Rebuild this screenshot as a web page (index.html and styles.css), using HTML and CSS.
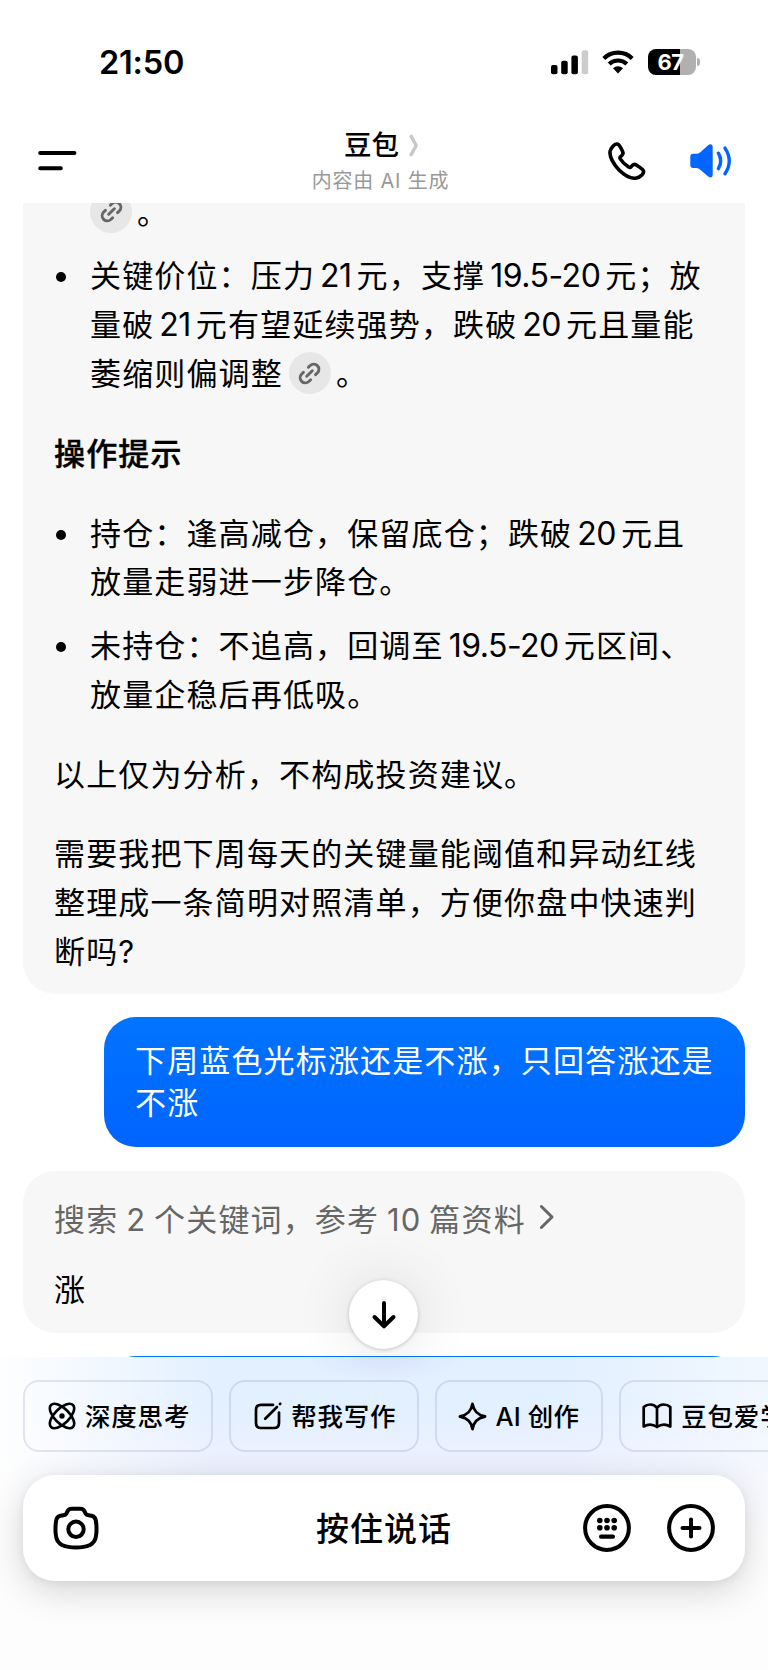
FILE: index.html
```
<!DOCTYPE html>
<html lang="zh-CN">
<head>
  <meta charset="UTF-8">
  <meta name="viewport" content="width=device-width, initial-scale=1.0">
  <title>豆包</title>
  <link rel="stylesheet" href="styles.css">
</head>
<body>
  <div class="status-bar">
    <span class="time">21:50</span>
    <div class="status-icons">
      <svg class="signal" width="38" height="25" viewBox="0 0 38 25">
        <rect x="0" y="15" width="6.5" height="9.2" rx="2"/>
        <rect x="10.2" y="10.7" width="6.5" height="13.5" rx="2"/>
        <rect x="20.4" y="5.5" width="6.5" height="18.7" rx="2"/>
        <rect x="30.7" y="0.3" width="6.5" height="23.9" rx="2" fill="#ccc"/>
      </svg>
      <svg class="wifi" width="32" height="24" viewBox="0 0 32 24">
        <path d="M1.8 8.4a20.5 20.5 0 0 1 28.4 0" fill="none" stroke="#000" stroke-width="4.2"/>
        <path d="M7.2 14a12.7 12.7 0 0 1 17.6 0" fill="none" stroke="#000" stroke-width="4.1"/>
        <path d="M11 18.2a7.4 7.4 0 0 1 10 0l-5 5.2z"/>
      </svg>
      <div class="battery"><span>67</span></div>
    </div>
  </div>

  <header class="nav">
    <svg class="menu" width="40" height="22" viewBox="0 0 40 22" fill="none" stroke="#000" stroke-width="4" stroke-linecap="round">
      <path d="M2.2 3H36.4M2.2 18.2H22.8"/>
    </svg>
    <div class="nav-title">
      <h1><span>豆包</span>
        <svg width="10" height="23" viewBox="0 0 10 23" fill="none" stroke="#c8c8c8" stroke-width="3.6" stroke-linecap="round" stroke-linejoin="round"><path d="M2.2 2.5L7.2 11.5L2.2 20.5"/></svg>
      </h1>
      <p>内容由 AI 生成</p>
    </div>
    <div class="nav-actions">
      <svg width="38" height="38" viewBox="0 0 38 38" fill="none" stroke="#000" stroke-width="3.6" stroke-linejoin="round">
        <path d="M9.8 2.2C7.2 1.3 3 5 2.1 9.2C1.2 14 5.2 22 10.8 27.7C16.5 33.3 23.5 37 28.4 36C32.8 35.1 36.4 31.2 35.4 28.6C34.8 27 30.7 24.6 28.6 23.2C26.4 21.8 24.9 22.5 23.8 24.1C22.7 25.8 21.8 25.8 20.3 24.8C17.5 23 14 19.6 12.3 16.9C11.5 15.5 11.9 14.8 13.3 13.9C15.2 12.6 15.6 11.4 14.5 9.2C13.2 6.6 11.5 2.9 9.8 2.2Z"/>
      </svg>
      <svg width="42" height="34" viewBox="0 0 42 34">
        <path fill="#06f" d="M.3 12.8q0-2.8 2.8-3h3.2q2.2-.1 4-1.6l7.6-6.8C20.3-.7 22.7.2 22.7 3v27.7c0 2.8-2.4 3.7-4.8 1.6l-7.6-6.6q-1.8-1.6-4-1.7H3.1q-2.8-.2-2.8-3z"/>
        <path d="M28.4 9.2q4.6 7.7 0 15.4M35 4.1q8.5 12.9 0 25.6" fill="none" stroke="#06f" stroke-width="3.4" stroke-linecap="round"/>
      </svg>
    </div>
  </header>

  <main class="chat">
    <section class="answer answer-long">
      <ul>
        <li class="cut"><span class="ref first"><svg viewBox="0 0 24 24"><path d="M9.5 14.5l5-5M11 6.5l1.6-1.6a4.6 4.6 0 0 1 6.5 6.5l-1.7 1.6M13 17.5l-1.6 1.6a4.6 4.6 0 0 1-6.5-6.5L6.6 11"/></svg></span>。</li>
        <li>关键价位：压力<span class="num">21</span>元，支撑<span class="num">19.5-20</span>元；放<br>量破<span class="num">21</span>元有望延续强势，跌破<span class="num">20</span>元且量能<br>萎缩则偏调整<span class="ref"><svg viewBox="0 0 24 24"><path d="M9.5 14.5l5-5M11 6.5l1.6-1.6a4.6 4.6 0 0 1 6.5 6.5l-1.7 1.6M13 17.5l-1.6 1.6a4.6 4.6 0 0 1-6.5-6.5L6.6 11"/></svg></span>。</li>
      </ul>
      <h2>操作提示</h2>
      <ul>
        <li>持仓：逢高减仓，保留底仓；跌破<span class="num">20</span>元且<br>放量走弱进一步降仓。</li>
        <li>未持仓：不追高，回调至<span class="num">19.5-20</span>元区间、<br>放量企稳后再低吸。</li>
      </ul>
      <p>以上仅为分析，不构成投资建议。</p>
      <p>需要我把下周每天的关键量能阈值和异动红线<br>整理成一条简明对照清单，方便你盘中快速判<br>断吗?</p>
    </section>

    <section class="question">下周蓝色光标涨还是不涨，只回答涨还是<br>不涨</section>

    <section class="answer answer-short">
      <div class="search">搜索 2 个关键词，参考 10 篇资料
        <svg width="16" height="26" viewBox="0 0 16 26" fill="none" stroke="#666" stroke-width="3" stroke-linecap="round" stroke-linejoin="round"><path d="M2.4 2.5L13 13L2.4 23.5"/></svg>
      </div>
      <p>涨</p>
    </section>

    <section class="question next"></section>

    <button class="to-bottom" aria-label="回到底部">
      <svg width="26" height="30" viewBox="0 0 26 30" fill="none" stroke="#000" stroke-width="4" stroke-linecap="round" stroke-linejoin="round"><path d="M13 3V26M3.5 17L13 26.3L22.5 17"/></svg>
    </button>
  </main>

  <footer class="bottom">
    <div class="tools">
      <button class="tool">
        <svg width="28" height="28" viewBox="0 0 28 28" fill="none" stroke="#000" stroke-width="2.6">
          <ellipse cx="14" cy="14" rx="15.5" ry="7.4" transform="rotate(45 14 14)"/>
          <ellipse cx="14" cy="14" rx="15.5" ry="7.4" transform="rotate(-45 14 14)"/>
          <circle cx="14" cy="14" r="2.7" fill="#000" stroke="none"/>
        </svg><span>深度思考</span>
      </button>
      <button class="tool">
        <svg width="28" height="28" viewBox="0 0 28 28" fill="none" stroke="#000" stroke-width="2.7" stroke-linecap="round">
          <path d="M19 2.9H7Q2 2.9 2 7.9V21Q2 26 7 26H20Q25 26 25 21V10.5M11.2 16.8L23 5"/><path d="M26 2L26.2 1.8"/>
        </svg><span>帮我写作</span>
      </button>
      <button class="tool tool-ai">
        <svg width="29" height="29" viewBox="0 0 29 29" fill="none" stroke="#000" stroke-width="2.9" stroke-linejoin="round"><path d="M14.5 2C15.8 9 19 12.7 27 14.5C19 16.3 15.8 20 14.5 27C13.2 20 10 16.3 2 14.5C10 12.7 13.2 9 14.5 2Z"/></svg><span>AI 创作</span>
      </button>
      <button class="tool tool-learn">
        <svg width="30" height="28" viewBox="0 0 30 28" fill="none" stroke="#000" stroke-width="2.7" stroke-linejoin="round" stroke-linecap="round"><path d="M15 6Q12.5 2.5 8.5 2.5Q4.5 2.5 1.7 5V24.5Q8.5 20.5 15 25Q21.5 20.5 28.3 24.5V5Q25.5 2.5 21.5 2.5Q17.5 2.5 15 6ZM15 6V24.5"/></svg><span>豆包爱学</span>
      </button>
    </div>
    <div class="input-bar">
      <svg width="46" height="44" viewBox="0 0 46 44" fill="none" stroke="#000" stroke-width="4" stroke-linejoin="round">
        <path d="M18.5 2.8H27.5Q30 2.8 31.3 5L32.5 7.3Q33.6 9 35.6 9.3L38.5 9.8Q42 10.5 42.7 14Q44.3 22.5 42.9 30.5Q42.2 36 37 39Q31.5 41.5 23 41.5Q14.5 41.5 9 39Q3.8 36 3.1 30.5Q1.7 22.5 3.3 14Q4 10.5 7.5 9.8L10.4 9.3Q12.4 9 13.5 7.3L14.7 5Q16 2.8 18.5 2.8Z"/>
        <circle cx="23" cy="23.3" r="7.7"/>
      </svg>
      <span class="talk">按住说话</span>
      <div class="input-actions">
        <svg width="48" height="48" viewBox="0 0 48 48">
          <circle cx="24" cy="24" r="21.9" fill="none" stroke="#000" stroke-width="4"/>
          <circle cx="16.8" cy="16.5" r="2.8"/><circle cx="24" cy="16.5" r="2.8"/><circle cx="31.2" cy="16.5" r="2.8"/>
          <circle cx="16.8" cy="23.8" r="2.8"/><circle cx="24" cy="23.8" r="2.8"/><circle cx="31.2" cy="23.8" r="2.8"/>
          <rect x="16" y="30.5" width="16" height="4.3" rx="2.1"/>
        </svg>
        <svg width="48" height="48" viewBox="0 0 48 48" fill="none" stroke="#000" stroke-width="4" stroke-linecap="round">
          <circle cx="24" cy="24" r="21.9"/>
          <path d="M15.5 24H32.5M24 15.5V32.5"/>
        </svg>
      </div>
    </div>
  </footer>
</body>
</html>
```
FILE: styles.css
```
* {
  box-sizing: border-box;
}
body {
  margin: 0;
  width: 768px;
  height: 1670px;
  overflow: hidden;
  display: flex;
  flex-direction: column;
  background: #fff;
  color: #000;
  font-family: Inter, "Noto Sans CJK SC", sans-serif;
}
h1, h2, p, ul {
  margin: 0;
  padding: 0;
}
svg {
  display: block;
  flex: none;
}
button {
  font-family: inherit;
  color: inherit;
  padding: 0;
}

/* status bar */
.status-bar {
  height: 124px;
  padding: 0 68px 0 99px;
  display: flex;
  align-items: center;
  justify-content: space-between;
}
.time {
  font-size: 32.5px;
  font-weight: 600;
  letter-spacing: -0.2px;
}
.status-icons {
  display: flex;
  align-items: center;
}
.wifi {
  margin: 0 14px 0 13px;
}
.battery {
  position: relative;
  width: 48px;
  height: 26px;
  border-radius: 8px;
  background: linear-gradient(90deg, #000 67%, #b0b0b0 67%);
  color: #fff;
  font-size: 22px;
  font-weight: 700;
  line-height: 27px;
  text-align: center;
  letter-spacing: -0.5px;
  padding-right: 3px;
  margin-right: 4px;
}
.battery::after {
  content: "";
  position: absolute;
  right: -4px;
  top: 9px;
  width: 3px;
  height: 8px;
  border-radius: 0 4px 4px 0;
  background: #b0b0b0;
}

/* top nav */
.nav {
  height: 79px;
  padding: 0 36px 0 38px;
  display: grid;
  grid-template-columns: 130px 1fr 130px;
  align-items: start;
}
.menu {
  margin-top: 26px;
}
.nav-title {
  text-align: center;
  padding-right: 9px;
}
.nav-title h1 {
  display: flex;
  justify-content: center;
  align-items: center;
  gap: 10px;
  padding-left: 2px;
  height: 42px;
  font-size: 27.5px;
  font-weight: 500;
}
.nav-title h1 span {
  margin-top: -4px;
}
.nav-title p {
  font-size: 20px;
  line-height: 30px;
  letter-spacing: 0.8px;
  color: #999;
}
.nav-actions {
  display: flex;
  justify-content: space-between;
  align-items: center;
  padding: 18px 0 0 6px;
}

/* messages */
.chat {
  position: relative;
  height: 1154px;
  padding: 0 23px;
  overflow: hidden;
  font-size: 31px;
  letter-spacing: 1.15px;
  white-space: nowrap;
}
.answer {
  background: #f7f7f7;
  border-radius: 32px;
  padding: 0 31px;
}
.answer-long {
  height: 791px;
  padding-top: 1.5px;
  border-radius: 0 0 32px 32px;
  line-height: 48.8px;
  overflow: hidden;
}
.answer ul {
  list-style: none;
  padding-left: 36px;
  margin-bottom: 31px;
}
.answer li {
  position: relative;
  margin-bottom: 15.2px;
}
.answer li:last-child {
  margin-bottom: 0;
}
.answer li::before {
  content: "";
  position: absolute;
  left: -34px;
  top: 20px;
  width: 10px;
  height: 10px;
  border-radius: 50%;
  background: #000;
}
.answer li.cut {
  margin-top: -16px;
}
.answer li.cut::before {
  display: none;
}
.answer h2 {
  font-size: 31px;
  font-weight: 500;
  margin-bottom: 31px;
  -webkit-text-stroke: 0.4px #000;
}
.answer-long p {
  margin-bottom: 30.2px;
}
.num {
  font-size: 32px;
  line-height: 1;
  letter-spacing: -0.5px;
  margin: 0 5px;
}
.ref {
  display: inline-flex;
  align-items: center;
  justify-content: center;
  vertical-align: top;
  width: 42px;
  height: 42px;
  margin: 2px 5px 0 6px;
  border-radius: 50%;
  background: #e7e7e7;
}
.ref.first {
  margin-left: 0;
}
.ref svg {
  width: 27px;
  height: 27px;
  fill: none;
  stroke: #666;
  stroke-width: 2.6;
  stroke-linecap: round;
}
.question {
  width: 641px;
  height: 130px;
  margin: 23px 0 24px auto;
  padding: 23px 31px;
  border-radius: 32px;
  background: linear-gradient(#0074ff, #0064ff);
  color: #fff;
  line-height: 42px;
}
.answer-short {
  height: 162px;
  padding-top: 25px;
}
.search {
  display: flex;
  align-items: center;
  gap: 13px;
  height: 42px;
  margin-bottom: 31px;
  color: #666;
  word-spacing: -2px;
}
.answer-short p {
  line-height: 42px;
}
.next {
  margin: 22.5px 0 0 auto;
}
.to-bottom {
  position: absolute;
  left: 349px;
  top: 1077px;
  width: 69px;
  height: 69px;
  border: none;
  border-radius: 50%;
  background: #fff;
  display: flex;
  align-items: center;
  justify-content: center;
  box-shadow: 0 1px 4px rgba(0, 0, 0, 0.2), 0 0 60px rgba(0, 0, 0, 0.12);
}

/* bottom area */
.bottom {
  height: 313px;
  padding-top: 23px;
  overflow: hidden;
  background:
    linear-gradient(rgba(253, 253, 253, 0) 100px, #fdfdfd 180px),
    radial-gradient(ellipse 80px 24px at 385px 0, rgba(205, 212, 250, 0.5), rgba(205, 212, 250, 0)),
    linear-gradient(90deg, rgba(255, 255, 255, 0.95), rgba(255, 255, 255, 0) 220px, rgba(255, 255, 255, 0) 560px, rgba(255, 255, 255, 0.5)),
    linear-gradient(#e3f0ff 50px, #ebf1ff 95px, #e9eefe 115px);
}
.tools {
  display: flex;
  gap: 16px;
  padding-left: 23px;
  margin-bottom: 23px;
}
.tool {
  flex: none;
  display: flex;
  align-items: center;
  gap: 9px;
  height: 72px;
  padding: 0 21px 0 23px;
  border: 2px solid rgba(60, 60, 140, 0.13);
  border-radius: 16px;
  background: none;
  font-size: 25.5px;
  font-weight: 500;
  letter-spacing: 0.8px;
  white-space: nowrap;
}
.tool-ai {
  gap: 8px;
  padding: 0 22px 0 21px;
  letter-spacing: 0.2px;
}
.tool-learn {
  padding-left: 21px;
}
.tool span {
  margin-top: -4px;
}
.input-bar {
  margin: 0 23px;
  height: 106px;
  padding: 0 30px;
  border-radius: 32px;
  background: #fff;
  display: flex;
  align-items: center;
  justify-content: space-between;
  box-shadow: 0 10px 36px rgba(0, 0, 0, 0.16), 0 2px 10px rgba(0, 0, 0, 0.06);
}
.talk {
  font-size: 33px;
  font-weight: 500;
  letter-spacing: 1px;
  margin: -2px 0 0 86px;
}
.input-actions {
  display: flex;
  gap: 36px;
}
```
